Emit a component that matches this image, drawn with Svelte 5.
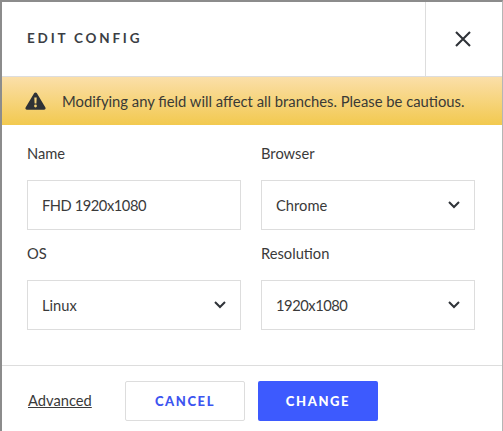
<script lang="ts">
	const fields = [
		{ label: 'Name', value: 'FHD 1920x1080', select: false, numeric: true },
		{ label: 'Browser', value: 'Chrome', select: true, numeric: false },
		{ label: 'OS', value: 'Linux', select: true, numeric: false },
		{ label: 'Resolution', value: '1920x1080', select: true, numeric: true }
	];
</script>

<div class="dialog">
	<header class="head">
		<h2>EDIT CONFIG</h2>
		<button class="close" type="button" aria-label="Close">
			<svg width="16" height="16" viewBox="0 0 16 16" fill="none" stroke="#2f3338" stroke-width="2.1">
				<path d="M1 1 L15 15 M15 1 L1 15" />
			</svg>
		</button>
	</header>

	<div class="warning">
		<svg width="21" height="18" viewBox="0 0 21 18">
			<path
				fill="#2f3236"
				fill-rule="evenodd"
				d="M10.5 0.5c.6 0 1.1.3 1.4.8l8.5 14.2c.6 1-.1 2.3-1.4 2.3H2c-1.300 0-2-1.300-1.400-2.300L9.100 1.300c.3-.5.8-.8 1.400-.8zM9.300 5.500l.3 6h1.800l.3-6zM10.500 12.600a1.400 1.400 0 1 0 0 2.800 1.400 1.400 0 0 0 0-2.800z"
			/>
		</svg>
		<span>Modifying any field will affect all branches. Please be cautious.</span>
	</div>

	<div class="form">
		{#each fields as field}
			<div class="field">
				<span class="label">{field.label}</span>
				<div class="input">
					<span class:numeric={field.numeric}>{field.value}</span>
					{#if field.select}
						<svg width="12" height="8" viewBox="0 0 12 8" fill="none" stroke="#2f3338" stroke-width="2">
							<path d="M1 1 L6 6 L11 1" />
						</svg>
					{/if}
				</div>
			</div>
		{/each}
	</div>

	<footer class="foot">
		<a href="#advanced">Advanced</a>
		<button class="btn cancel" type="button">CANCEL</button>
		<button class="btn change" type="button">CHANGE</button>
	</footer>
</div>

<style>
	:global(body) {
		margin: 0;
		background: #fff;
	}

	.dialog {
		box-sizing: border-box;
		width: 503px;
		height: 431px;
		border-top: 2px solid #8c8c8c;
		border-left: 2px solid #8c8c8c;
		border-right: 1px solid #b5b5b5;
		background: #fff;
		color: #3a3a3a;
		font-family: Lato, 'Open Sans', sans-serif;
		overflow: hidden;
	}

	.head {
		display: flex;
		justify-content: space-between;
		height: 74px;
		border-bottom: 1px solid #ddd;
	}

	.head h2 {
		margin: 0;
		padding: 27px 0 0 25px;
		font-size: 13.5px;
		line-height: 18px;
		font-weight: 700;
		letter-spacing: 2.8px;
		color: #3b3e44;
	}

	.close {
		width: 77px;
		padding: 0 2px 0 0;
		border: 0;
		border-left: 1px solid #ddd;
		background: none;
		display: grid;
		place-items: center;
	}

	.warning {
		display: flex;
		align-items: center;
		gap: 16px;
		height: 48px;
		padding-left: 23px;
		background: linear-gradient(#fbdfa9, #f2c94f);
		font-size: 14.8px;
		color: #3a3a36;
	}

	.form {
		display: grid;
		grid-template-columns: 214px 214px;
		column-gap: 20px;
		padding: 19px 0 0 25px;
		height: 241px;
		box-sizing: border-box;
		grid-auto-rows: 100px;
		border-bottom: 1px solid #ddd;
	}

	.field {
		display: flex;
		flex-direction: column;
	}

	.label {
		font-size: 14.7px;
		line-height: 18px;
		margin-bottom: 18px;
	}

	.input {
		box-sizing: border-box;
		height: 50px;
		display: flex;
		align-items: center;
		justify-content: space-between;
		padding: 0 14px;
		border: 1px solid #ddd;
		font-size: 14.7px;
	}

	.numeric {
		letter-spacing: -0.45px;
	}

	.foot {
		display: flex;
		align-items: center;
		padding: 15px 0 0 26px;
	}

	.foot a {
		width: 97px;
		margin-bottom: 2px;
		font-size: 14.7px;
		color: #3a3a3a;
		text-decoration: underline;
	}

	.btn {
		box-sizing: border-box;
		width: 120px;
		height: 40px;
		padding: 0 0 1px;
		border-radius: 2px;
		font-family: inherit;
		font-size: 13px;
		font-weight: 900;
		letter-spacing: 1.6px;
	}

	.cancel {
		border: 1px solid #ddd;
		background: #fff;
		color: #3d55f0;
		margin-right: 13px;
	}

	.change {
		border: 0;
		background: #3d5afe;
		color: #fff;
	}
</style>
